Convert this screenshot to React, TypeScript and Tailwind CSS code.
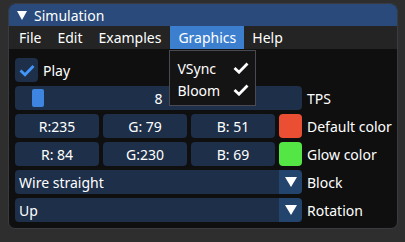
import React from "react";

const font = { fontFamily: '"Noto Sans", "Open Sans", sans-serif' };

function DownTri({ w, h }: { w: number; h: number }) {
  return (
    <svg width={w} height={h} viewBox={`0 0 ${w} ${h}`}>
      <polygon points={`0,0 ${w},0 ${w / 2},${h}`} fill="#ffffff" />
    </svg>
  );
}

function Check({ color, w, h, sw }: { color: string; w: number; h: number; sw: number }) {
  return (
    <svg width={w} height={h} viewBox="0 0 16 12">
      <polyline
        points="1.5,6 6,10.2 14.5,1.5"
        fill="none"
        stroke={color}
        strokeWidth={sw}
        strokeLinecap="butt"
        strokeLinejoin="miter"
      />
    </svg>
  );
}

function Field({ text }: { text: string }) {
  return (
    <div className="w-[84px] h-[24px] rounded-[4px] bg-[#1d2f49] flex items-center justify-center whitespace-pre text-white">
      {text}
    </div>
  );
}

function Combo({ value, label }: { value: string; label: string }) {
  return (
    <div className="flex items-center h-[24px]">
      <div className="w-[287px] h-[24px] flex rounded-[4px] overflow-hidden">
        <div className="flex-1 bg-[#1d2f49] flex items-center pl-[4px] text-white">{value}</div>
        <div className="w-[23px] bg-[#23456d] flex items-center justify-center">
          <DownTri w={12} h={10} />
        </div>
      </div>
      <span className="ml-[5px] text-white">{label}</span>
    </div>
  );
}

export default function App() {
  return (
    <div className="w-[405px] h-[242px] bg-[#2e2e2e] pt-[3px] pl-[8px] overflow-hidden text-[14px] leading-[19px]" style={font}>
      <div className="w-[390px] h-[226px] rounded-[7px] border border-[#3a3a42] bg-[#0f0f0f] flex flex-col">
        <div className="h-[22px] bg-[#294a7a] rounded-t-[6px] flex items-center pl-[8px]">
          <DownTri w={10} h={9} />
          <span className="ml-[7px] text-white text-[14px]">Simulation</span>
        </div>
        <div className="h-[23px] bg-[#242424] flex items-center pl-[2px] text-white">
          <div className="px-[8px] h-full flex items-center">File</div>
          <div className="px-[8px] h-full flex items-center">Edit</div>
          <div className="px-[8px] h-full flex items-center">Examples</div>
          <div className="relative h-full ml-[1px]">
            <div className="px-[8px] h-full flex items-center bg-[#3c7fcf]">Graphics</div>
            <div className="absolute left-[-1px] top-[24px] w-[87px] h-[56px] bg-[#141414] border border-[#4a4a52] pt-[6px] pl-[7px] pr-[6px] z-10">
              <div className="h-[22px] flex items-center justify-between">
                <span>VSync</span>
                <Check color="#ffffff" w={16} h={12} sw={2.8} />
              </div>
              <div className="h-[22px] flex items-center justify-between">
                <span>Bloom</span>
                <Check color="#ffffff" w={16} h={12} sw={2.8} />
              </div>
            </div>
          </div>
          <div className="px-[8px] h-full flex items-center">Help</div>
        </div>
        <div className="pt-[9px] pl-[6px] flex flex-col gap-[4px]">
          <div className="flex items-center h-[24px]">
            <div className="w-[23px] h-[24px] rounded-[4px] bg-[#1d2f49] flex items-center justify-center">
              <Check color="#4296fa" w={16} h={13} sw={2.8} />
            </div>
            <span className="ml-[5px] text-white">Play</span>
          </div>
          <div className="flex items-center h-[24px]">
            <div className="w-[287px] h-[24px] rounded-[4px] bg-[#1d2f49] relative flex items-center justify-center text-white">
              <div className="absolute left-[17px] top-[3px] w-[12px] h-[18px] rounded-[2px] bg-[#3d85e0]" />
              <span>8</span>
            </div>
            <span className="ml-[5px] text-white">TPS</span>
          </div>
          <div className="flex items-center h-[24px] gap-[4px]">
            <Field text="R:235" />
            <Field text="G: 79" />
            <Field text="B: 51" />
            <div className="w-[23px] h-[24px] rounded-[4px] bg-[#eb4f33]" />
            <span className="ml-[1px] text-white">Default color</span>
          </div>
          <div className="flex items-center h-[24px] gap-[4px]">
            <Field text="R: 84" />
            <Field text="G:230" />
            <Field text="B: 69" />
            <div className="w-[23px] h-[24px] rounded-[4px] bg-[#54e645]" />
            <span className="ml-[1px] text-white">Glow color</span>
          </div>
          <Combo value="Wire straight" label="Block" />
          <Combo value="Up" label="Rotation" />
        </div>
      </div>
    </div>
  );
}
